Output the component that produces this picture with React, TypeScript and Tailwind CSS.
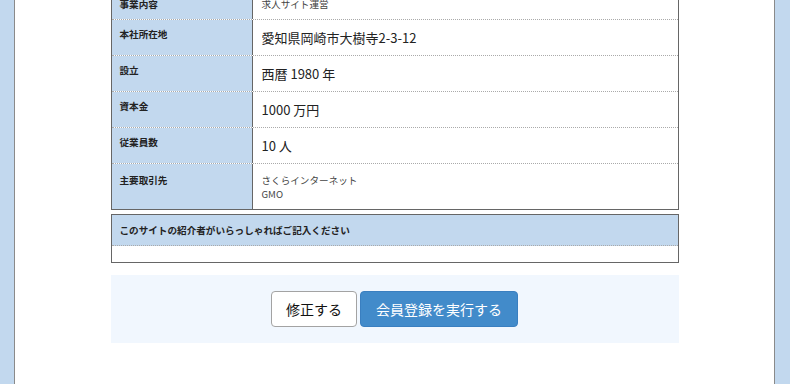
import React from "react";

const font = { fontFamily: '"Noto Sans CJK JP", "Noto Sans", sans-serif' };

type Row = { label: string; value: string[]; large: boolean };

const rows: Row[] = [
  { label: "事業内容", value: ["求人サイト運営"], large: false },
  { label: "本社所在地", value: ["愛知県岡崎市大樹寺2-3-12"], large: true },
  { label: "設立", value: ["西暦 1980 年"], large: true },
  { label: "資本金", value: ["1000 万円"], large: true },
  { label: "従業員数", value: ["10 人"], large: true },
  { label: "主要取引先", value: ["さくらインターネット", "GMO"], large: false },
];

export default function App() {
  return (
    <div className="h-[384px] overflow-hidden bg-[#c2d8ee] pl-[14px] pr-[15px]" style={font}>
      <div className="flow-root h-full border-x border-[#8a8a8a] bg-white">
        <div className="mx-auto w-[568px] -mt-[13px]">
          {/* company table */}
          <div className="border border-[#666]">
            {rows.map((r, i) => (
              <div
                key={r.label}
                className={
                  "flex " +
                  (i < rows.length - 1 ? "border-b border-dotted border-[#aaa]" : "")
                }
              >
                <div
                  className={
                    "w-[141px] shrink-0 bg-[#c2d8ee] border-r border-[#666] pl-[8px] text-[9.6px] font-bold leading-[14px] text-[#222] " +
                    (r.large ? "pt-[7px]" : "pt-[9px]")
                  }
                >
                  {r.label}
                </div>
                <div
                  className={
                    "flex-1 pl-[9px] " +
                    (r.large
                      ? "pt-[8px] pb-[8px] text-[13px] leading-[19px] text-[#222]"
                      : "pt-[9px] pb-[8px] text-[9.6px] leading-[14px] text-[#444]")
                  }
                >
                  {r.value.map((v) => (
                    <div key={v}>{v}</div>
                  ))}
                </div>
              </div>
            ))}
          </div>

          {/* introducer box */}
          <div className="mt-[4px] border border-[#666]">
            <div className="bg-[#c2d8ee] border-b border-dotted border-[#aaa] pl-[8px] py-[8px] text-[9.6px] font-bold leading-[14px] text-[#222]">
              このサイトの紹介者がいらっしゃればご記入ください
            </div>
            <div className="h-[16px]" />
          </div>

          {/* buttons */}
          <div className="mt-[12px] flex h-[68px] items-center justify-center gap-[3px] bg-[#f1f7fe]">
            <button className="h-[36px] rounded-[4px] border border-[#a3a3a3] bg-white px-[14px] text-[14px] leading-[20px] text-[#111]">
              修正する
            </button>
            <button className="h-[36px] rounded-[4px] border border-[#3a7fc0] bg-[#428bca] px-[15px] text-[14px] leading-[20px] text-white">
              会員登録を実行する
            </button>
          </div>
        </div>
      </div>
    </div>
  );
}
